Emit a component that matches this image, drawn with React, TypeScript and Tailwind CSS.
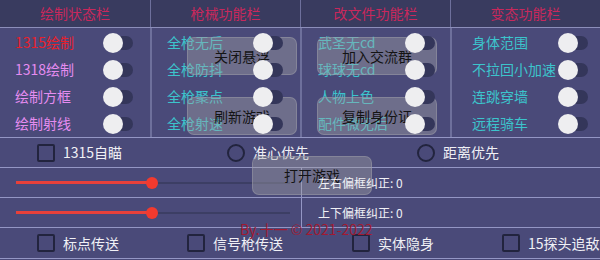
import React from 'react';

const font = { fontFamily: '"Noto Sans CJK SC", "Noto Sans", sans-serif' };

type Item = { label: string; color: string };

const columns: { title: string; pl: string; pr: string; items: Item[] }[] = [
  {
    title: '绘制状态栏',
    pl: 'pl-[15px]',
    pr: 'pr-[17px]',
    items: [
      { label: '1315绘制', color: 'text-[#e8202c]' },
      { label: '1318绘制', color: 'text-[#e58cf0]' },
      { label: '绘制方框', color: 'text-[#e58cf0]' },
      { label: '绘制射线', color: 'text-[#e58cf0]' },
    ],
  },
  {
    title: '枪械功能栏',
    pl: 'pl-[15px]',
    pr: 'pr-[17px]',
    items: [
      { label: '全枪无后', color: 'text-[#3cc4cc]' },
      { label: '全枪防抖', color: 'text-[#3cc4cc]' },
      { label: '全枪聚点', color: 'text-[#3cc4cc]' },
      { label: '全枪射速', color: 'text-[#3cc4cc]' },
    ],
  },
  {
    title: '改文件功能栏',
    pl: 'pl-[16px]',
    pr: 'pr-[15px]',
    items: [
      { label: '武圣无cd', color: 'text-[#3cc4cc]' },
      { label: '球球无cd', color: 'text-[#3cc4cc]' },
      { label: '人物上色', color: 'text-[#3cc4cc]' },
      { label: '配件微无后', color: 'text-[#3cc4cc]' },
    ],
  },
  {
    title: '变态功能栏',
    pl: 'pl-[20px]',
    pr: 'pr-[12px]',
    items: [
      { label: '身体范围', color: 'text-[#3cc4cc]' },
      { label: '不拉回小加速', color: 'text-[#3cc4cc]' },
      { label: '连跳穿墙', color: 'text-[#3cc4cc]' },
      { label: '远程骑车', color: 'text-[#3cc4cc]' },
    ],
  },
];

function Switch() {
  return (
    <div className="relative z-20 w-[30px] h-[20px] flex items-center">
      <div className="absolute left-[6px] right-0 h-[14px] rounded-full bg-[#34365a]" />
      <div className="relative w-[20px] h-[20px] rounded-full bg-[#eeeef0]" />
    </div>
  );
}

function Checkbox({ label }: { label: string }) {
  return (
    <div className="flex items-center gap-[8px]">
      <div className="w-[18px] h-[18px] border-2 border-[#22243e] rounded-[2px]" />
      <span className="text-[14px] text-[#f0f0f5]">{label}</span>
    </div>
  );
}

function Radio({ label }: { label: string }) {
  return (
    <div className="flex items-center gap-[8px]">
      <div className="w-[18px] h-[18px] border-2 border-[#22243e] rounded-full" />
      <span className="text-[14px] text-[#f0f0f5]">{label}</span>
    </div>
  );
}

function Slider({ label }: { label: string }) {
  return (
    <div className="flex h-[30px] border-b border-[#9496c4]">
      <div className="w-[302px] border-r border-[#9496c4] flex items-center pl-[16px]">
        <div className="relative w-[274px] h-[12px] flex items-center">
          <div className="absolute left-0 right-0 h-[2px] bg-[#3c3e64]" />
          <div className="absolute left-0 w-[136px] h-[3px] bg-[#e8403a]" />
          <div className="absolute left-[130px] w-[12px] h-[12px] rounded-full bg-[#f23a2e]" />
        </div>
      </div>
      <div className="relative z-20 flex items-center pl-[16px] text-[12px] text-[#f0f0f5]">{label}</div>
    </div>
  );
}

function Overlay({ label, className }: { label: string; className: string }) {
  return (
    <div
      className={`absolute z-10 flex items-center justify-center rounded-[7px] border border-[#9a9aa8]/50 bg-[#a6a6a8]/40 text-[14px] text-[#141414] ${className}`}
    >
      {label}
    </div>
  );
}

export default function App() {
  return (
    <div className="relative w-[600px] h-[260px] overflow-hidden bg-[#4a4a79]" style={font}>
      {/* Header */}
      <div className="flex h-[28px] bg-[#393b5f] border-b border-[#8c8eba]">
        {columns.map((c, i) => (
          <div
            key={c.title}
            className={`w-[150px] flex items-center justify-center text-[14px] text-[#c8285c] ${i > 0 ? 'border-l border-[#6e709c]' : ''}`}
          >
            {c.title}
          </div>
        ))}
      </div>

      {/* Switch panels */}
      <div className="flex h-[110px] border-b border-[#9496c4]">
        {columns.map((c, i) => (
          <div
            key={c.title}
            className={`w-[150px] flex flex-col pt-[1px] ${c.pl} ${c.pr} ${i > 0 ? 'border-l-2 border-[#6e709c]' : ''}`}
          >
            {c.items.map((it) => (
              <div key={it.label} className="h-[27px] flex items-center justify-between">
                <span className={`text-[14px] ${it.color}`}>{it.label}</span>
                <Switch />
              </div>
            ))}
          </div>
        ))}
      </div>

      {/* Aim row */}
      <div className="flex items-center h-[30px] pl-[37px] border-b border-[#9496c4]">
        <div className="w-[190px]">
          <Checkbox label="1315自瞄" />
        </div>
        <div className="w-[190px]">
          <Radio label="准心优先" />
        </div>
        <Radio label="距离优先" />
      </div>

      {/* Sliders */}
      <Slider label="左右偏框纠正: 0" />
      <Slider label="上下偏框纠正: 0" />

      {/* Bottom row */}
      <div className="flex items-center h-[31px] pl-[37px] border-b border-[#9496c4]">
        <div className="w-[150px]">
          <Checkbox label="标点传送" />
        </div>
        <div className="w-[165px]">
          <Checkbox label="信号枪传送" />
        </div>
        <div className="w-[150px]">
          <Checkbox label="实体隐身" />
        </div>
        <Checkbox label="15探头追敌" />
      </div>

      {/* Floating window buttons */}
      <Overlay label="关闭悬浮" className="left-[187px] top-[37px] w-[110px] h-[38px]" />
      <Overlay label="刷新游戏" className="left-[187px] top-[97px] w-[110px] h-[38px]" />
      <Overlay label="加入交流群" className="left-[317px] top-[37px] w-[120px] h-[38px]" />
      <Overlay label="复制身份证" className="left-[317px] top-[97px] w-[120px] h-[38px]" />
      <Overlay label="打开游戏" className="left-[252px] top-[156px] w-[120px] h-[39px]" />

      <div className="absolute z-30 left-[240px] top-[219px] text-[14px] text-[#a01a32]">By.十一 © 2021-2022</div>
    </div>
  );
}
